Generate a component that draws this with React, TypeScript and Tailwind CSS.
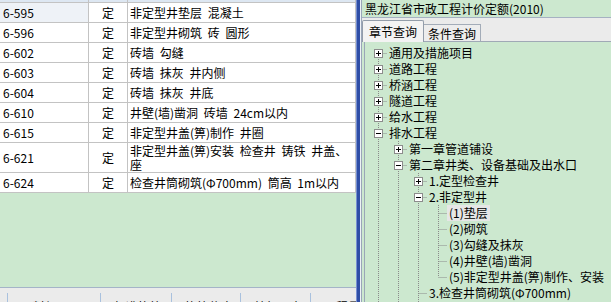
import React from "react";

type Row = { code: string; unit: string; desc: React.ReactNode; tall?: boolean; sel?: boolean };

const ROWS: Row[] = [
  { code: "6-595", unit: "定", desc: "非定型井垫层 混凝土", sel: true },
  { code: "6-596", unit: "定", desc: "非定型井砌筑 砖 圆形" },
  { code: "6-602", unit: "定", desc: "砖墙 勾缝" },
  { code: "6-603", unit: "定", desc: "砖墙 抹灰 井内侧" },
  { code: "6-604", unit: "定", desc: "砖墙 抹灰 井底" },
  { code: "6-610", unit: "定", desc: "井壁(墙)凿洞 砖墙 24cm以内" },
  { code: "6-615", unit: "定", desc: "非定型井盖(箅)制作 井圈" },
  {
    code: "6-621",
    unit: "定",
    tall: true,
    desc: (
      <>
        非定型井盖(箅)安装 检查井 铸铁 井盖、
        <br />座
      </>
    ),
  },
  { code: "6-624", unit: "定", desc: "检查井筒砌筑(Φ700mm) 筒高 1m以内" },
];

type Node = { label: string; level: number; kids?: "open" | "closed"; sel?: boolean };

const TREE: Node[] = [
  { label: "通用及措施项目", level: 0, kids: "closed" },
  { label: "道路工程", level: 0, kids: "closed" },
  { label: "桥涵工程", level: 0, kids: "closed" },
  { label: "隧道工程", level: 0, kids: "closed" },
  { label: "给水工程", level: 0, kids: "closed" },
  { label: "排水工程", level: 0, kids: "open" },
  { label: "第一章管道铺设", level: 1, kids: "closed" },
  { label: "第二章井类、设备基础及出水口", level: 1, kids: "open" },
  { label: "1.定型检查井", level: 2, kids: "closed" },
  { label: "2.非定型井", level: 2, kids: "open" },
  { label: "(1)垫层", level: 3, sel: true },
  { label: "(2)砌筑", level: 3 },
  { label: "(3)勾缝及抹灰", level: 3 },
  { label: "(4)井壁(墙)凿洞", level: 3 },
  { label: "(5)非定型井盖(箅)制作、安装", level: 3 },
  { label: "3.检查井筒砌筑(Φ700mm)", level: 2 },
  { label: "4.雨水进水井", level: 2, kids: "closed" },
  { label: "第三章不开槽施工管道工程", level: 1, kids: "closed" },
  { label: "燃气与集中供热工程", level: 0, kids: "closed" },
];

// does a node at `level` continue below row i (a later sibling exists)
function continues(i: number, level: number) {
  for (let j = i + 1; j < TREE.length; j++) {
    if (TREE[j].level < level) return false;
    if (TREE[j].level === level) return true;
  }
  return false;
}

const COL = 20;

function Guides({ i }: { i: number }) {
  const n = TREE[i];
  const w = COL * (n.level + 1);
  const cx = n.level * COL + 10.5;
  const dot = { stroke: "#8a8a8a", strokeWidth: 1, strokeDasharray: "1 1" };
  const lines: React.ReactNode[] = [];
  for (let a = 0; a < n.level; a++) {
    if (continues(i, a)) {
      lines.push(<line key={"a" + a} x1={a * COL + 10.5} y1={0} x2={a * COL + 10.5} y2={16} {...dot} />);
    }
  }
  if (i > 0) lines.push(<line key="up" x1={cx} y1={0} x2={cx} y2={8} {...dot} />);
  if (continues(i, n.level)) lines.push(<line key="dn" x1={cx} y1={8} x2={cx} y2={16} {...dot} />);
  lines.push(<line key="h" x1={cx} y1={8.5} x2={w - 1} y2={8.5} {...dot} />);
  return (
    <svg width={w} height={16} className="shrink-0">
      {lines}
      {n.kids && (
        <g>
          <rect x={cx - 4} y={4.5} width={8} height={8} fill="#fff" stroke="#8c8c8c" />
          <line x1={cx - 2.5} y1={8.5} x2={cx + 2.5} y2={8.5} stroke="#000" />
          {n.kids === "closed" && <line x1={cx} y1={6} x2={cx} y2={11} stroke="#000" />}
        </g>
      )}
    </svg>
  );
}

export default function App() {
  return (
    <div className="flex h-[302px] w-[611px] overflow-hidden bg-[#cce8cf] font-['Noto_Sans_CJK_SC',sans-serif] text-[12px] text-black">
      {/* left: quota list */}
      <div className="flex w-[356px] shrink-0 flex-col">
        <div className="flex h-[3px] border-b border-[#c3c3c3] bg-[#dde7f2]">
          <div className="w-[89px] border-r border-[#c3c3c3]" />
          <div className="w-[39px] border-r border-[#c3c3c3]" />
          <div className="flex-1 border-r border-[#c3c3c3]" />
        </div>
        {ROWS.map((r) => (
          <div
            key={r.code}
            className={`flex border-b border-[#c3c3c3] bg-white ${r.tall ? "h-[30px]" : "h-[20px]"}`}
          >
            <div
              className={`flex w-[89px] items-center border-r border-[#c3c3c3] pl-[3px] ${r.sel ? "bg-[#eef2f7]" : ""}`}
            >
              {r.code}
            </div>
            <div className="flex w-[39px] items-center justify-center border-r border-[#c3c3c3]">{r.unit}</div>
            <div className="flex flex-1 items-center border-r border-[#c3c3c3] pl-[2px] leading-[14px] [word-spacing:3px]">
              <span>{r.desc}</span>
            </div>
          </div>
        ))}
        <div className="flex-1 border-b border-[#a4b4c8]" />
        <div className="flex h-[14px] bg-[#ebebeb] pl-[7px] pt-[5px] leading-[16px]">
          {[
            ["工料机显示", "w-[93px]"],
            ["标准换算", "w-[71px]"],
            ["换算信息", "w-[69px]"],
            ["特征及内容", "w-[70px]"],
            ["工程量明细", "w-[60px]"],
          ].map(([t, w]) => (
            <div key={t} className={`${w} shrink-0 overflow-hidden border-l border-[#a9c1de] pl-[13px] pt-[6px]`}>
              {t}
            </div>
          ))}
        </div>
      </div>

      {/* splitter */}
      <div className="w-px shrink-0 bg-[#7790d2]" />
      <div className="w-[3px] shrink-0 bg-[#2f4ea6]" />
      <div className="w-px shrink-0 bg-[#eef2f6]" />

      {/* right: chapter tree */}
      <div className="flex min-w-0 flex-1 flex-col border-l border-[#9aa6b8]">
        <div className="h-[18px] shrink-0 border-b border-[#a5b1c2] pl-[3px] leading-[17px]">
          黑龙江省市政工程计价定额(2010)
        </div>
        <div className="flex h-[24px] shrink-0 items-end border-b border-[#a0a9b6] bg-[#ebebeb]">
          <div className="-mb-px flex h-[22px] w-[62px] items-center justify-center rounded-t-[2px] border border-b-0 border-[#939daa] bg-[#f3f3f3] pt-[1px]">
            章节查询
          </div>
          <div className="flex h-[17px] w-[57px] items-center justify-center border border-b-0 border-l-0 border-[#a3acb8] bg-[#ededed] pt-[1px]">
            条件查询
          </div>
        </div>
        <div className="flex-1 overflow-hidden pl-[2px]">
          <div className="h-full border-l border-[#9aa6b8] pl-[3px] pt-[3px]">
            {TREE.map((n, i) => (
              <div key={n.label} className="flex h-[16px] items-center whitespace-nowrap leading-[16px]">
                <Guides i={i} />
                <span className={`ml-[-1px] px-[2px] ${n.sel ? "bg-[#e6e6e6]" : ""}`}>{n.label}</span>
              </div>
            ))}
          </div>
        </div>
      </div>
    </div>
  );
}
